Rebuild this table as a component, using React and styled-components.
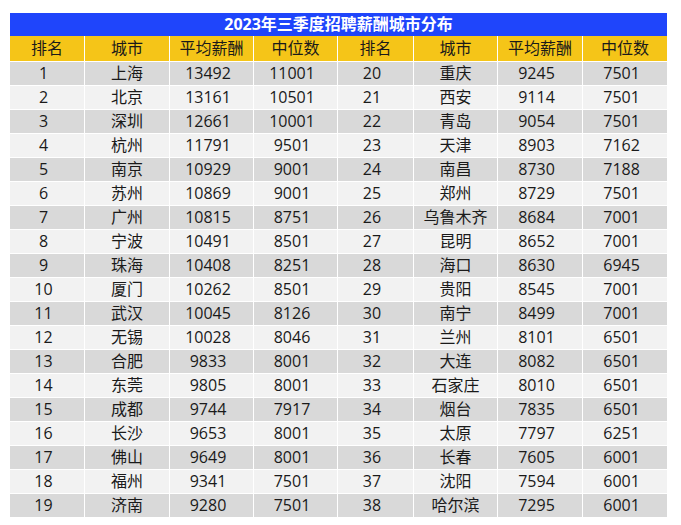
import React from "react";
import styled, {createGlobalStyle} from "styled-components";

const GlobalStyle = createGlobalStyle`
    html, body {
        margin: 0;
        padding: 0;
        background: #fff;
    }

    body {
        font-family: "Open Sans", "Noto Sans CJK SC", sans-serif;
        color: #1a1a1a;
    }
`;

const Page = styled.div`
    padding: 13px 0 0 10px;
`;

const Table = styled.table`
    width: 657px;
    border-collapse: separate;
    border-spacing: 0;
    table-layout: fixed;
    font-size: 16px;
`;

const Title = styled.th`
    height: 23px;
    padding: 0;
    background: #1f45fb;
    color: #fff;
    font-weight: 700;
    font-size: 16px;
    line-height: 23px;
    text-align: center;
`;

const Head = styled.th`
    height: 25px;
    padding: 0;
    background: #f5c518;
    font-weight: 400;
    line-height: 25px;
    text-align: center;
    color: #1a1a1a;
    border-right: ${({$last}) => ($last ? "none" : "1px solid #fff")};
`;

const Cell = styled.td`
    height: 23px;
    padding: 0 ${({$num}) => ($num ? "7px" : "0")} 0 0;
    line-height: 23px;
    text-align: center;
    white-space: nowrap;
    background: ${({$odd}) => ($odd ? "#d9d9d9" : "#f2f2f2")};
    border-top: 1px solid #fff;
    border-right: ${({$last}) => ($last ? "none" : "1px solid #fff")};
`;

const widths = [75, 85, 84, 84, 76, 84, 85, 84];
const headers = ["排名", "城市", "平均薪酬", "中位数", "排名", "城市", "平均薪酬", "中位数"];

const rows = [
    [1, "上海", 13492, 11001, 20, "重庆", 9245, 7501],
    [2, "北京", 13161, 10501, 21, "西安", 9114, 7501],
    [3, "深圳", 12661, 10001, 22, "青岛", 9054, 7501],
    [4, "杭州", 11791, 9501, 23, "天津", 8903, 7162],
    [5, "南京", 10929, 9001, 24, "南昌", 8730, 7188],
    [6, "苏州", 10869, 9001, 25, "郑州", 8729, 7501],
    [7, "广州", 10815, 8751, 26, "乌鲁木齐", 8684, 7001],
    [8, "宁波", 10491, 8501, 27, "昆明", 8652, 7001],
    [9, "珠海", 10408, 8251, 28, "海口", 8630, 6945],
    [10, "厦门", 10262, 8501, 29, "贵阳", 8545, 7001],
    [11, "武汉", 10045, 8126, 30, "南宁", 8499, 7001],
    [12, "无锡", 10028, 8046, 31, "兰州", 8101, 6501],
    [13, "合肥", 9833, 8001, 32, "大连", 8082, 6501],
    [14, "东莞", 9805, 8001, 33, "石家庄", 8010, 6501],
    [15, "成都", 9744, 7917, 34, "烟台", 7835, 6501],
    [16, "长沙", 9653, 8001, 35, "太原", 7797, 6251],
    [17, "佛山", 9649, 8001, 36, "长春", 7605, 6001],
    [18, "福州", 9341, 7501, 37, "沈阳", 7594, 6001],
    [19, "济南", 9280, 7501, 38, "哈尔滨", 7295, 6001],
];

const App = () => (
    <>
        <GlobalStyle/>
        <Page>
            <Table>
                <colgroup>
                    {widths.map((w, i) => <col key={i} style={{width: w}}/>)}
                </colgroup>
                <thead>
                    <tr>
                        <Title colSpan={8}>2023年三季度招聘薪酬城市分布</Title>
                    </tr>
                    <tr>
                        {headers.map((h, i) => (
                            <Head key={i} $last={i === 7}>{h}</Head>
                        ))}
                    </tr>
                </thead>
                <tbody>
                    {rows.map((row, r) => (
                        <tr key={r}>
                            {row.map((v, i) => (
                                <Cell
                                    key={i}
                                    $odd={r % 2 === 0}
                                    $num={typeof v === "number"}
                                    $last={i === 7}
                                >
                                    {v}
                                </Cell>
                            ))}
                        </tr>
                    ))}
                </tbody>
            </Table>
        </Page>
    </>
);

export default App;
